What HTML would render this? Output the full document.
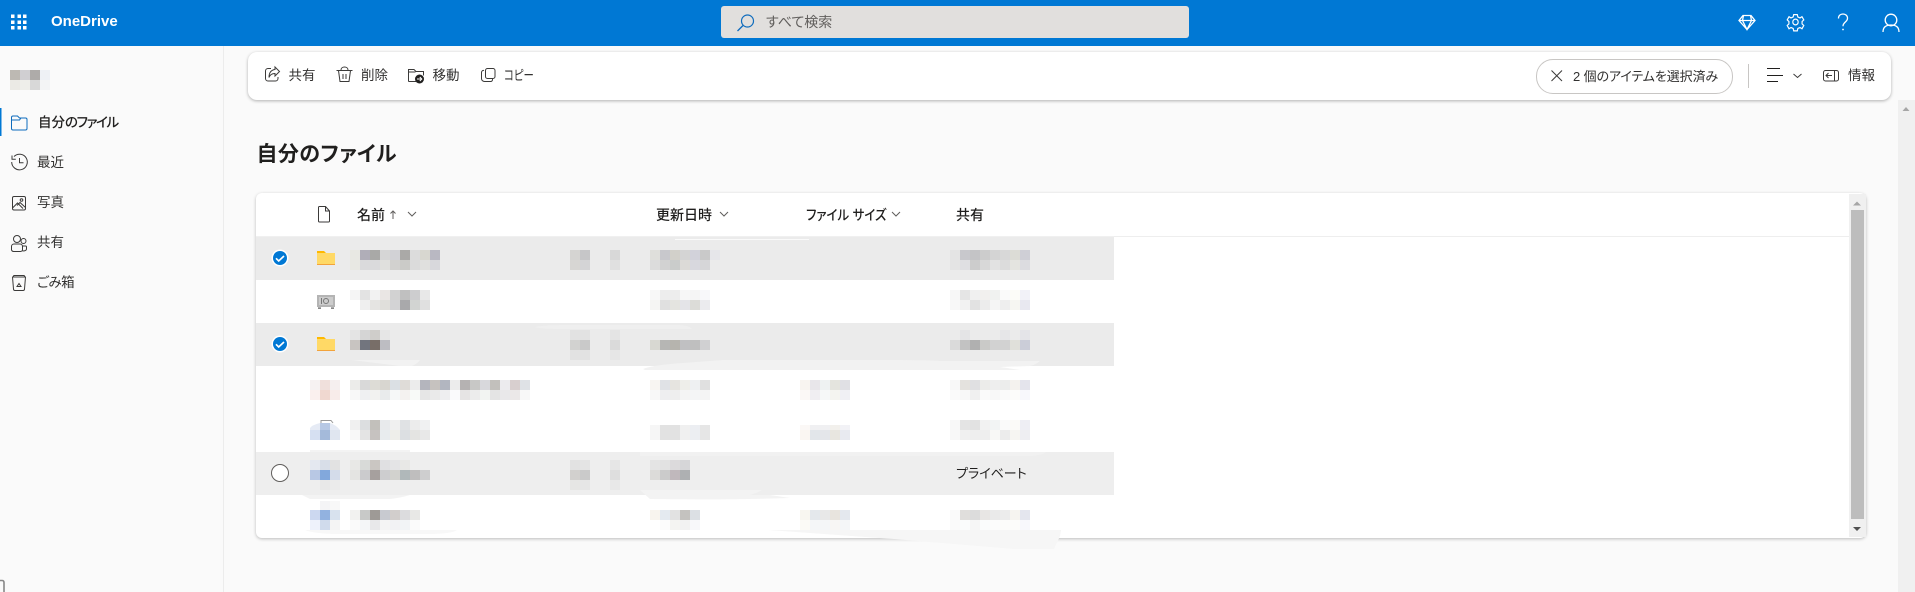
<!DOCTYPE html>
<html lang="ja"><head><meta charset="utf-8"><title>OneDrive</title>
<style>
html,body{margin:0;padding:0;width:1915px;height:592px;overflow:hidden;background:#fafafa}
body{position:relative;font-family:"Liberation Sans","Noto Sans CJK JP",sans-serif;color:#323130;font-feature-settings:"palt"}
.a{position:absolute}
.t{position:absolute;white-space:nowrap;line-height:20px;font-size:13.5px}
.b{font-weight:500;color:#201f1e;font-size:14px}
#top{left:0;top:0;width:1915px;height:46px;background:#0078d4}
#search{left:721px;top:6px;width:468px;height:32px;background:#e1dfdd;border-radius:3px}
#side{left:223px;top:46px;width:1px;height:546px;background:#ececec}
#track{left:1898px;top:100px;width:17px;height:492px;background:#f0f0f0}
#bar{left:248px;top:52px;width:1643px;height:48px;background:#fff;border-radius:9px;box-shadow:0 1px 3px rgba(0,0,0,.3)}
#pill{left:1536px;top:59px;width:195px;height:33px;background:#fff;border:1px solid #c8c6c4;border-radius:17px}
#card{left:256px;top:193px;width:1610px;height:345px;background:#fff;border-radius:6px;box-shadow:0 1px 3px rgba(0,0,0,.25)}
svg{position:absolute;left:0;top:0}
.m rect{width:10px;height:10px}
.s{fill:none;stroke:#3b3a39;stroke-width:1}
.w{fill:none;stroke:#fff;stroke-width:1.3}
</style></head><body>
<div class="a" id="top"></div>
<div class="a" id="search"></div>
<div class="a" id="side"></div>
<div class="a" id="track"></div>
<div class="a" id="bar"></div>
<div class="a" id="pill"></div>
<div class="a" id="card"></div>

<svg width="1915" height="592" viewBox="0 0 1915 592">
<!-- row backgrounds -->
<rect x="256" y="237" width="858" height="43" fill="#ebebeb"/>
<rect x="256" y="323" width="858" height="43" fill="#ebebeb"/>
<rect x="256" y="452" width="858" height="43" fill="#eeeeee"/>
<rect x="1114" y="236" width="735" height="1" fill="#eeeeee"/>
<rect x="256" y="236" width="858" height="1" fill="#f0f0f0"/>
<!-- brush streaks -->
<g fill="#f2f2f2">
<rect x="675" y="239" width="134" height="1" fill="#fafafa"/>
<path d="M535 327q10-2 30-2H680q10 1 12 4H560q-20 0-25-2z" fill="#efefef"/>
<path d="M352 360H420q-3 4-8 6H400q-25-3-48-6z"/>
<path d="M643 369q10-4 40-6l40-3H880q50 0 60 1H1040q-5 4-10 5l-30 1 20 3H645z"/>
<path d="M640 452H1046q-3 3-15 4H640z" fill="#f1f1f1"/>
<path d="M310 450H410v2H310z" fill="#f3f3f3"/>
<path d="M302 495H410q-10 3-20 4H310z" fill="#f3f3f3"/>
<path d="M640 490H762q-5 3-12 5H770l20 3q-60 2-140 1z" fill="#f3f3f3"/>
<path d="M305 530H457q-5 4-30 4H340q-25 0-35-4z" fill="#f8f8f8"/>
<path d="M768 530H1061l-1 6-6 13-40 0-120-10-126-9z" fill="#f6f6f6"/>
</g>
<!-- scrollbars -->
<rect x="1849" y="194" width="17" height="343" fill="#f0f0f0"/>
<rect x="1851" y="210" width="13" height="309" fill="#bdbdbd"/>
<path d="M1853 205.500l4-4 4 4z" fill="#a6a6a6"/>
<path d="M1853 527h8l-4 4z" fill="#505050"/>
<path d="M1902.500 111l3.500-4 3.500 4z" fill="#a6a6a6"/>
<!-- sidebar blur -->
<g class="m"><g transform="translate(0,70)"><rect x="10" fill="#bdb9b3"/><rect x="20" fill="#d0cfd2"/><rect x="30" fill="#aeaba9"/><rect x="40" fill="#eef1f5"/></g>
<g transform="translate(0,80)"><rect x="10" fill="#ebeae5"/><rect x="20" fill="#eeeeea"/><rect x="30" fill="#d8d8d8"/><rect x="40" fill="#f3f4f5"/></g>

<!-- row 1 -->
<g transform="translate(0,250)"><rect x="350" fill="#e8e8e3"/><rect x="360" fill="#b0aeb8"/><rect x="370" fill="#a9a9a7"/><rect x="380" fill="#d6d6d6"/><rect x="390" fill="#d2d2d6"/><rect x="400" fill="#aaa9a7"/><rect x="410" fill="#dcdcdc"/><rect x="420" fill="#d8d7d0"/><rect x="430" fill="#b9b8c2"/>
<rect x="570" fill="#d5d4d2"/><rect x="580" fill="#c6c6c8"/><rect x="610" fill="#d8d8d8"/>
<rect x="650" fill="#dfdfdb"/><rect x="660" fill="#c8c8cc"/><rect x="670" fill="#d2d0ca"/><rect x="680" fill="#d4d4d4"/><rect x="690" fill="#d2d2da"/><rect x="700" fill="#c9c9c9"/><rect x="710" fill="#e6e6ea"/>
<rect x="950" fill="#e4e4e4"/><rect x="960" fill="#c8c8cc"/><rect x="970" fill="#c4c4c6"/><rect x="980" fill="#cccccc"/><rect x="990" fill="#d4d4d4"/><rect x="1000" fill="#d8d8d8"/><rect x="1010" fill="#dcdcd6"/><rect x="1020" fill="#cfcfd6"/></g>
<g transform="translate(0,260)"><rect x="350" fill="#e8e8e3"/><rect x="360" fill="#dadadc"/><rect x="370" fill="#dadadc"/><rect x="380" fill="#e0e0dd"/><rect x="390" fill="#d2d1cf"/><rect x="400" fill="#cbcbc8"/><rect x="410" fill="#dbdbdb"/><rect x="420" fill="#e0e0de"/><rect x="430" fill="#d8d8dc"/>
<rect x="570" fill="#d7d6d3"/><rect x="580" fill="#d4d4d6"/><rect x="610" fill="#e0e0e0"/>
<rect x="650" fill="#dcdcdc"/><rect x="660" fill="#d2d2d2"/><rect x="670" fill="#cacccb"/><rect x="680" fill="#dcdad7"/><rect x="690" fill="#d8d8de"/><rect x="700" fill="#d6d6d8"/>
<rect x="950" fill="#e4e4e4"/><rect x="960" fill="#dfdfe2"/><rect x="970" fill="#cccccc"/><rect x="980" fill="#d8d8d8"/><rect x="990" fill="#e2e2e2"/><rect x="1000" fill="#dcdcdc"/><rect x="1010" fill="#e4e4e0"/><rect x="1020" fill="#dcdce0"/></g>

<!-- row 2 -->
<g transform="translate(0,290)"><rect x="350" fill="#f5f5f5"/><rect x="360" fill="#e3e3e3"/><rect x="370" fill="#f2f2f2"/><rect x="380" fill="#eae6e4"/><rect x="390" fill="#d2d2d2"/><rect x="400" fill="#c0c0c0"/><rect x="410" fill="#cdcdcf"/><rect x="420" fill="#e8e8e8"/>
<rect x="650" fill="#f8f8f8"/><rect x="660" fill="#ededed"/><rect x="670" fill="#ededed"/><rect x="680" fill="#f7f7f7"/><rect x="690" fill="#f5f5f5"/><rect x="700" fill="#f8f8fa"/>
<rect x="950" fill="#f7f7f7"/><rect x="960" fill="#e5e5e5"/><rect x="970" fill="#f0f0f0"/><rect x="980" fill="#f2f0ee"/><rect x="990" fill="#f0f2f0"/><rect x="1000" fill="#fafafa"/><rect x="1010" fill="#fcfcf8"/><rect x="1020" fill="#f2f2f8"/></g>
<g transform="translate(0,300)"><rect x="360" fill="#efefef"/><rect x="370" fill="#e5e4e2"/><rect x="380" fill="#e0dfdb"/><rect x="390" fill="#d3d3d5"/><rect x="400" fill="#a9a9ab"/><rect x="410" fill="#d2d4d2"/><rect x="420" fill="#e0e0e0"/>
<rect x="650" fill="#f5f5f3"/><rect x="660" fill="#e0e0e0"/><rect x="670" fill="#e4e4e0"/><rect x="680" fill="#e4e4e8"/><rect x="690" fill="#dcdcd8"/><rect x="700" fill="#ebebee"/>
<rect x="950" fill="#f8f8f8"/><rect x="960" fill="#f2f2f2"/><rect x="970" fill="#e2e2e2"/><rect x="980" fill="#ececec"/><rect x="990" fill="#f5f5f5"/><rect x="1000" fill="#eeeeee"/><rect x="1010" fill="#f6f6f2"/><rect x="1020" fill="#e8e8f0"/></g>

<!-- row 3 -->
<g transform="translate(0,330)"><rect x="350" fill="#e4e4e4"/><rect x="360" fill="#d5d5d5"/><rect x="370" fill="#cfcdca"/><rect x="380" fill="#e6e6e6"/>
<rect x="570" fill="#e2e2e2"/><rect x="580" fill="#e2e2e2"/><rect x="610" fill="#e4e4e4"/>
<rect x="960" fill="#e4e4e6"/><rect x="1000" fill="#e6e6e8"/><rect x="1020" fill="#e4e4e8"/></g>
<g transform="translate(0,340)"><rect x="350" fill="#c8c4c1"/><rect x="360" fill="#72757e"/><rect x="370" fill="#786e68"/><rect x="380" fill="#bdbdc2"/>
<rect x="570" fill="#d2d2d0"/><rect x="580" fill="#c9c9c9"/><rect x="610" fill="#dadada"/>
<rect x="650" fill="#d8d8d2"/><rect x="660" fill="#b6b6b4"/><rect x="670" fill="#b6b4ae"/><rect x="680" fill="#c0c0c2"/><rect x="690" fill="#bfbfbf"/><rect x="700" fill="#d0d0d2"/>
<rect x="950" fill="#dadada"/><rect x="960" fill="#c2c2c2"/><rect x="970" fill="#b0b0b0"/><rect x="980" fill="#cacac8"/><rect x="990" fill="#d2d2d2"/><rect x="1000" fill="#d2d2d2"/><rect x="1010" fill="#e0e0da"/><rect x="1020" fill="#cbcdd8"/></g>
<g transform="translate(0,350)"><rect x="570" fill="#e2e2e2"/><rect x="580" fill="#e2e2e2"/><rect x="610" fill="#e6e6e6"/></g>

<!-- row 4 -->
<g transform="translate(0,380)"><rect x="310" fill="#f6f2f2"/><rect x="320" fill="#f0e0dc"/><rect x="330" fill="#f5efef"/>
<rect x="350" fill="#ececea"/><rect x="360" fill="#d9d9d9"/><rect x="370" fill="#dddcd6"/><rect x="380" fill="#d8d6d0"/><rect x="390" fill="#dbe0e4"/><rect x="400" fill="#dfdcd8"/><rect x="410" fill="#ececec"/><rect x="420" fill="#b4b5bd"/><rect x="430" fill="#c6c2bf"/><rect x="440" fill="#b2b6c0"/><rect x="450" fill="#ececec"/><rect x="460" fill="#b5b2b2"/><rect x="470" fill="#c8c8c6"/><rect x="480" fill="#d8d8dc"/><rect x="490" fill="#c2c0bc"/><rect x="500" fill="#ecebee"/><rect x="510" fill="#d8cfcf"/><rect x="520" fill="#dfe2e6"/>
<rect x="650" fill="#f8f5f2"/><rect x="660" fill="#e0e2e6"/><rect x="670" fill="#e6e4e0"/><rect x="680" fill="#eeeeea"/><rect x="690" fill="#eef0f2"/><rect x="700" fill="#e0e0e0"/>
<rect x="800" fill="#f8f4f0"/><rect x="810" fill="#e8e6ea"/><rect x="820" fill="#eef2f2"/><rect x="830" fill="#e4e4de"/><rect x="840" fill="#e0e0e4"/>
<rect x="950" fill="#f8f8f8"/><rect x="960" fill="#e4e2de"/><rect x="970" fill="#e0e0e2"/><rect x="980" fill="#ececea"/><rect x="990" fill="#eeeeee"/><rect x="1000" fill="#ecedec"/><rect x="1010" fill="#f4f2ee"/><rect x="1020" fill="#e4e4ec"/></g>
<g transform="translate(0,390)"><rect x="310" fill="#faf0ee"/><rect x="320" fill="#f0d8d0"/><rect x="330" fill="#f8ecea"/>
<rect x="350" fill="#f8f8f8"/><rect x="360" fill="#eff0f2"/><rect x="370" fill="#f2f2f0"/><rect x="380" fill="#e9ebec"/><rect x="390" fill="#f6f8f8"/><rect x="400" fill="#f4f2f0"/><rect x="410" fill="#f8faf8"/><rect x="420" fill="#e6e6e6"/><rect x="430" fill="#eaeaea"/><rect x="440" fill="#eeeef0"/><rect x="450" fill="#fafafc"/><rect x="460" fill="#e6e4e4"/><rect x="470" fill="#ececec"/><rect x="480" fill="#f2f4f2"/><rect x="490" fill="#e4e4e4"/><rect x="500" fill="#e9e8ea"/><rect x="510" fill="#ebe8e8"/><rect x="520" fill="#f8f8f8"/>
<rect x="650" fill="#f8f8f8"/><rect x="660" fill="#eeeef0"/><rect x="670" fill="#eeeeee"/><rect x="680" fill="#f4f4f4"/><rect x="690" fill="#f4f5f6"/><rect x="700" fill="#f4f4f4"/>
<rect x="800" fill="#fbf8f6"/><rect x="810" fill="#f0eef2"/><rect x="820" fill="#f6f8f8"/><rect x="830" fill="#f4f4f0"/><rect x="840" fill="#f0f0f4"/>
<rect x="950" fill="#fafafa"/><rect x="960" fill="#f8f8f8"/><rect x="970" fill="#f0f0f0"/><rect x="980" fill="#fafafa"/><rect x="990" fill="#f8f8f8"/><rect x="1000" fill="#fafafa"/><rect x="1010" fill="#fcfcfa"/><rect x="1020" fill="#f8f8fc"/></g>

<!-- row 5 -->
<g transform="translate(0,420)"><rect x="350" fill="#f0f0f0"/><rect x="360" fill="#dcdee0"/><rect x="370" fill="#c2c0bb"/><rect x="380" fill="#e8eaec"/><rect x="390" fill="#f0f0f0"/><rect x="400" fill="#e0e2e4"/><rect x="410" fill="#ececec"/><rect x="420" fill="#f0f1f2"/>
<rect x="950" fill="#f8f8f8"/><rect x="960" fill="#e4e4e4"/><rect x="970" fill="#e2e2e2"/><rect x="980" fill="#f2f2f2"/><rect x="990" fill="#f2f4f4"/><rect x="1000" fill="#fafafa"/><rect x="1010" fill="#fbfaf8"/><rect x="1020" fill="#eeeef4"/></g>
<g transform="translate(0,425)"><rect x="650" fill="#f6f6f6"/><rect x="660" fill="#e2e2e2"/><rect x="670" fill="#e2e2e2"/><rect x="680" fill="#f0f0f0"/><rect x="690" fill="#eceef2"/><rect x="700" fill="#e6e6e6"/>
<rect x="800" fill="#fbf8f6"/><rect x="810" fill="#f0f0f2"/><rect x="820" fill="#f0f0f2"/><rect x="830" fill="#f2f0ec"/><rect x="840" fill="#f2f2f6"/></g>
<g transform="translate(0,430)"><rect x="310" fill="#d6e0f2"/><rect x="320" fill="#a4bada"/><rect x="330" fill="#e0e6f0"/>
<rect x="350" fill="#f8f8f8"/><rect x="360" fill="#e4e4e4"/><rect x="370" fill="#c6c2c0"/><rect x="380" fill="#e8ecee"/><rect x="390" fill="#eeeeea"/><rect x="400" fill="#dcdfe2"/><rect x="410" fill="#e4e4e2"/><rect x="420" fill="#e8e8e8"/>
<rect x="650" fill="#f6f6f6"/><rect x="660" fill="#e2e2e2"/><rect x="670" fill="#e2e2e2"/><rect x="680" fill="#f0f0f0"/><rect x="690" fill="#eceef2"/><rect x="700" fill="#e6e6e6"/>
<rect x="800" fill="#faf6f2"/><rect x="810" fill="#e2e6ea"/><rect x="820" fill="#e4e6ea"/><rect x="830" fill="#e8e6e0"/><rect x="840" fill="#e8eaf0"/>
<rect x="950" fill="#f8f8f8"/><rect x="960" fill="#f0f0f0"/><rect x="970" fill="#eeeeee"/><rect x="980" fill="#eeeeee"/><rect x="990" fill="#f8f8f6"/><rect x="1000" fill="#ececec"/><rect x="1010" fill="#f6f5f2"/><rect x="1020" fill="#eeeef2"/></g>

<!-- row 6 -->
<g transform="translate(0,460)"><rect x="310" fill="#e4e8f0"/><rect x="320" fill="#d8dee8"/><rect x="330" fill="#e2e2e2"/>
<rect x="350" fill="#e8e8e6"/><rect x="360" fill="#d8dad8"/><rect x="370" fill="#cac6c2"/><rect x="380" fill="#e0e0e2"/><rect x="390" fill="#e4e4e6"/><rect x="400" fill="#e8e8e6"/>
<rect x="570" fill="#e2e2e2"/><rect x="580" fill="#e4e4e4"/><rect x="610" fill="#e6e6e6"/>
<rect x="650" fill="#e4e4e4"/><rect x="660" fill="#e2e2e2"/><rect x="670" fill="#dcdadc"/><rect x="680" fill="#d6d6d8"/></g>
<g transform="translate(0,470)"><rect x="310" fill="#b8c8e4"/><rect x="320" fill="#82a8dc"/><rect x="330" fill="#d4dcea"/>
<rect x="350" fill="#e4e4e2"/><rect x="360" fill="#cbcbcd"/><rect x="370" fill="#a6a09e"/><rect x="380" fill="#cdcdcf"/><rect x="390" fill="#d2d2ce"/><rect x="400" fill="#b0b8ba"/><rect x="410" fill="#bfbebe"/><rect x="420" fill="#cececf"/>
<rect x="570" fill="#d2d0ce"/><rect x="580" fill="#cacaca"/><rect x="610" fill="#dedede"/>
<rect x="650" fill="#dcdbd9"/><rect x="660" fill="#cbcbcb"/><rect x="670" fill="#c0b8bc"/><rect x="680" fill="#aeb0b2"/></g>
<g transform="translate(0,480)"><rect x="320" fill="#e8e8e8"/><rect x="330" fill="#ebebeb"/><rect x="570" fill="#e6e6e4"/><rect x="580" fill="#e6e6e6"/><rect x="610" fill="#e8e8e8"/></g>

<!-- row 7 -->
<g transform="translate(0,501)"><rect x="320" fill="#f4f4f6"/><rect x="330" fill="#f8f8f8"/></g>
<g transform="translate(0,510)"><rect x="310" fill="#ccd8f0"/><rect x="320" fill="#92b2e0"/><rect x="330" fill="#d8e2ee"/>
<rect x="350" fill="#f2f2f0"/><rect x="360" fill="#c8c9c8"/><rect x="370" fill="#9e9a96"/><rect x="380" fill="#c8cad0"/><rect x="390" fill="#d2cecc"/><rect x="400" fill="#dcdcde"/><rect x="410" fill="#e8e8e6"/>
<rect x="650" fill="#f8f4ee"/><rect x="660" fill="#e4eaf0"/><rect x="670" fill="#e2e2e2"/><rect x="680" fill="#c4c2bf"/><rect x="690" fill="#dce0e4"/>
<rect x="800" fill="#f8f6f0"/><rect x="810" fill="#e4e8ec"/><rect x="820" fill="#e8e8e8"/><rect x="830" fill="#e8e4de"/><rect x="840" fill="#e4e8ee"/>
<rect x="950" fill="#fafafa"/><rect x="960" fill="#e0dedc"/><rect x="970" fill="#dcdcdc"/><rect x="980" fill="#e8e6e4"/><rect x="990" fill="#eaeaea"/><rect x="1000" fill="#ececec"/><rect x="1010" fill="#f6f4f0"/><rect x="1020" fill="#e4e6ee"/></g>
<g transform="translate(0,520)"><rect x="310" fill="#eef2fb"/><rect x="320" fill="#d0dbec"/><rect x="330" fill="#f4f4f4"/>
<rect x="350" fill="#fafafa"/><rect x="360" fill="#f4f6f8"/><rect x="370" fill="#e8e8ea"/><rect x="380" fill="#f4f4f4"/><rect x="390" fill="#f2f2f4"/><rect x="400" fill="#f2f4f6"/><rect x="410" fill="#fbfbfb"/>
<rect x="660" fill="#fcfcfc"/><rect x="670" fill="#f4f4f2"/><rect x="680" fill="#f2f2f2"/><rect x="690" fill="#f8f8fa"/>
<rect x="800" fill="#fbfaf6"/><rect x="810" fill="#f4f6f8"/><rect x="820" fill="#f4f6f8"/><rect x="830" fill="#f8f6f4"/><rect x="840" fill="#f4f6f8"/>
<rect x="950" fill="#fafafa"/><rect x="960" fill="#fafcfc"/><rect x="970" fill="#f6f6f6"/><rect x="980" fill="#fafcfc"/><rect x="990" fill="#fcfcfc"/><rect x="1000" fill="#fcfcfa"/><rect x="1010" fill="#fcfcfa"/><rect x="1020" fill="#f8f8fc"/></g>
</g>
<!-- row 5 icon top -->
<path d="M310 430v-2q2-3 10-5h10q6 2 10 7z" fill="#e6ebf5"/>
<rect x="320" y="423" width="10" height="7" fill="#b7c8e4"/>
<path d="M321 423v-2.500h10l2 2.500" fill="none" stroke="#999" stroke-width="1"/>

<!-- topbar icons -->
<g fill="#fff"><rect x="11" y="14.500" width="3.500" height="3.500"/><rect x="17.500" y="14.500" width="3.500" height="3.500"/><rect x="23" y="14.500" width="3.500" height="3.500"/><rect x="11" y="20.500" width="3.500" height="3.500"/><rect x="17.500" y="20.500" width="3.500" height="3.500"/><rect x="23" y="20.500" width="3.500" height="3.500"/><rect x="11" y="26" width="3.500" height="3.500"/><rect x="17.500" y="26" width="3.500" height="3.500"/><rect x="23" y="26" width="3.500" height="3.500"/></g>
<circle cx="747.500" cy="21" r="6" fill="none" stroke="#0f6cbd" stroke-width="1.200"/><path d="M743 25.500L737.500 31" stroke="#0f6cbd" stroke-width="1.300"/>
<path d="M1743 15.500h8l4 5-8 9-8-9zM1739 20.500h16M1743.500 15.500l-1 5 4.500 9 4.500-9-1-5" class="w"/>
<g class="w" transform="translate(1795.500 22) scale(.9 .95) translate(-1795 -22)"><circle cx="1795" cy="22" r="3"/><path d="M1793 14.200h4l.6 2.500 2.400 1 2.200-1.300 2 3.400-1.900 1.700v2.500l1.900 1.700-2 3.400-2.200-1.300-2.400 1-.6 2.500h-4l-.6-2.500-2.400-1-2.200 1.300-2-3.400 1.900-1.700v-2.500l-1.900-1.700 2-3.400 2.200 1.300 2.400-1z"/></g>
<path d="M1838.500 18.500c0-3 2-4.500 4.500-4.500s4.500 1.600 4.500 4.200c0 3.800-4.500 3.800-4.500 8" class="w"/><circle cx="1843" cy="29.500" r=".9" fill="#fff"/>
<g class="w" stroke-width="1.500"><circle cx="1891" cy="20" r="5.800"/><path d="M1883 32c0-5 3-7 8-7s8 2 8 7"/></g>

<!-- toolbar icons -->
<g class="s">
<path d="M271 68.500h-3a2.500 2.500 0 0 0-2.500 2.500v7.500a2.500 2.500 0 0 0 2.500 2.500h7.500a2.500 2.500 0 0 0 2.500-2.500v-1.500"/><path d="M275 67l4.500 4.500-4.500 4.500v-2.500c-3 0-5 1-6 4 0-5 2-7.500 6-8z"/>
<path d="M336.500 70.500h16M341 70c0-4 7-4 7 0M338.500 70.500l1.500 11h9l1.500-11M343 74v5M346 74v5"/>
<path d="M408.500 81.500v-12h5.500l2 2h7.500v4M408.500 72h7M416 81.500h-7.500"/>
<path d="M484 70.500a2 2 0 0 0-2.500 2v6a3 3 0 0 0 3 3h6a2 2 0 0 0 2-2.500"/><rect x="485.500" y="68.500" width="9.500" height="10" rx="2"/>
<path d="M1551.500 70.500l10.500 10.500M1562 70.500l-10.500 10.500"/>
<path d="M1793.500 74l4 3.500 4-3.500"/>
<rect x="1823.500" y="70.500" width="15" height="10.500" rx="2"/><path d="M1834.500 70.500v10.500M1832 75.500h-6M1828.500 73l-2.500 2.500 2.500 2.500"/>
</g>
<circle cx="419.500" cy="79" r="4.500" fill="#201f1e"/><path d="M417 79h4.500M419.800 77l2 2-2 2" fill="none" stroke="#fff" stroke-width="1"/>
<rect x="1748" y="64" width="1" height="24" fill="#c8c6c4"/>
<g fill="#201f1e"><rect x="1767" y="68" width="13" height="1"/><rect x="1767" y="75" width="16" height="1"/><rect x="1767" y="81" width="11" height="1"/></g>

<!-- sidebar icons -->
<rect x="0" y="108" width="1.500" height="28" fill="#0078d4"/>
<path d="M11.500 128.500v-11q0-1.500 1.500-1.500h4.500l2 2h6q1.500 0 1.500 1.500v9q0 1.500-1.500 1.500h-12.500q-1.500 0-1.500-1.500zM11.500 120h8l1.500-2" fill="none" stroke="#0f6cbd" stroke-width="1"/>
<g class="s">
<path d="M14 156.500a7.800 7.800 0 1 1-2.300 5.500M12 155.500v3.800h3.800M19.500 158v4.800h4"/>
<rect x="12.500" y="196.500" width="13" height="13.500" rx="1.500"/><path d="M12.500 208l5-5 3.500 3.500 2 2M17 205.500l3-3 5.500 5"/><circle cx="21.500" cy="200" r="1.300"/>
<circle cx="17" cy="239" r="3.500"/><circle cx="23.500" cy="241" r="2.500"/><path d="M11.500 250v-3.500a2.500 2.500 0 0 1 2.500-2.500h6a2.500 2.500 0 0 1 2.500 2.500v3a2 2 0 0 1-2 2h-7a2.500 2.500 0 0 1-2-1.500M22.500 246h3a1 1 0 0 1 1 1v2q0 2-4 2"/>
<path d="M12.500 277h13l-1 12q0 1.500-1.500 1.500h-8q-1.500 0-1.500-1.500zM14 277q-1-1 0-1.500h10q1 .5 0 1.500"/><path d="M17 286.500l2-3 2 3z"/>
<path d="M318.500 207.500q0-1 1-1h6l4 4.500v10q0 1-1 1h-9q-1 0-1-1zM325.500 206.500v4.500h4"/>
</g>

<!-- column header chevrons -->
<g class="s" stroke-width=".9">
<path d="M393 219v-8M390.500 213.500l2.500-2.500 2.500 2.500" stroke="#605e5c"/>
<path d="M408 212l4 4 4-4" stroke="#605e5c"/>
<path d="M720 212l4 4 4-4" stroke="#605e5c"/>
<path d="M892 212l4 4 4-4" stroke="#605e5c"/>
</g>

<!-- check circles -->
<g>
<circle cx="280" cy="258" r="8.500" fill="#fff"/><circle cx="280" cy="258" r="7" fill="#0078d4"/><path d="M276 258.300l2.700 2.700 5.300-5" fill="none" stroke="#fff" stroke-width="1.700"/>
<circle cx="280" cy="344" r="8.500" fill="#fff"/><circle cx="280" cy="344" r="7" fill="#0078d4"/><path d="M276 344.300l2.700 2.700 5.300-5" fill="none" stroke="#fff" stroke-width="1.700"/>
<circle cx="280" cy="473" r="8.500" fill="#fff" stroke="#605e5c" stroke-width="1"/>
</g>

<!-- folder icons -->
<g id="f"><path d="M317 251h7l2 2v4h-9z" fill="#ffb900"/><rect x="317" y="253" width="18" height="11" fill="#ffd966"/><rect x="317" y="264" width="18" height="1" fill="#f2a33c"/></g>
<g><path d="M317 337h7l2 2v4h-9z" fill="#ffb900"/><rect x="317" y="339" width="18" height="11" fill="#ffd966"/><rect x="317" y="350" width="18" height="1" fill="#f2a33c"/></g>

<!-- safe icon -->
<rect x="317" y="295" width="18" height="12" fill="#b4b4b4"/><rect x="319" y="297" width="14" height="8" fill="#ccc"/><circle cx="326" cy="301" r="2.500" fill="none" stroke="#777" stroke-width="1"/><rect x="321" y="298" width="1" height="6" fill="#777"/><rect x="318" y="307.500" width="3" height="1.200" fill="#555"/><rect x="331" y="307.500" width="3" height="1.200" fill="#555"/>

<!-- bottom-left artifact -->
<path d="M0 580.500h2q2 0 2 2V592" fill="none" stroke="#888" stroke-width="1.600"/>
</svg>

<div class="t" style="left:51px;top:12px;color:#fff;font-size:15px;font-weight:bold">OneDrive</div>
<div class="t" style="left:766px;top:12px;color:#605e5c;font-size:14px">すべて検索</div>

<div class="t" style="left:38px;top:113px;font-weight:500;color:#201f1e">自分<span style="letter-spacing:-1.4px">のファイル</span></div>
<div class="t" style="left:37px;top:153px">最近</div>
<div class="t" style="left:37px;top:193px">写真</div>
<div class="t" style="left:37px;top:233px">共有</div>
<div class="t" style="left:37px;top:273px;letter-spacing:-.5px">ごみ箱</div>

<div class="t" style="left:288.500px;top:65.500px">共有</div>
<div class="t" style="left:361px;top:65.500px">削除</div>
<div class="t" style="left:432.500px;top:65.500px">移動</div>
<div class="t" style="left:504px;top:65.500px;transform:scaleX(.77);transform-origin:0 50%">コピー</div>
<div class="t" style="left:1573px;top:66.500px;font-size:13px;letter-spacing:-.1px">2 個のアイテムを選択済み</div>
<div class="t" style="left:1848px;top:65.500px">情報</div>

<div class="t" style="left:256.500px;top:145px;font-size:21px;font-weight:700;color:#201f1e;letter-spacing:.4px">自分のファイル</div>

<div class="t b" style="left:357px;top:205px">名前</div>
<div class="t b" style="left:656px;top:205px">更新日時</div>
<div class="t b" style="left:806px;top:205px;transform:scaleX(.89);transform-origin:0 50%">ファイル サイズ</div>
<div class="t b" style="left:956px;top:205px">共有</div>
<div class="t" style="left:956px;top:464px;font-size:13px;color:#201f1e">プライベート</div>
</body></html>
